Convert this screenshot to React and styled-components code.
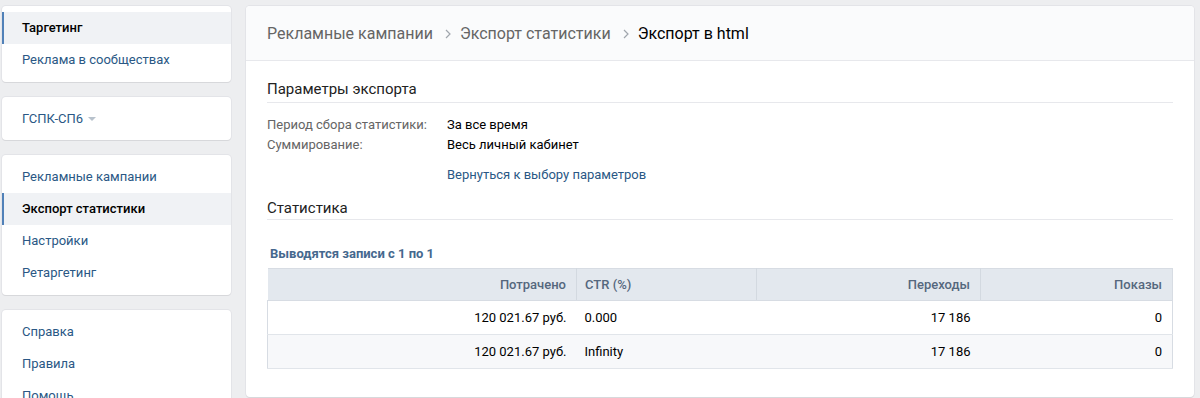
import styled, { createGlobalStyle } from "styled-components";

const GlobalStyle = createGlobalStyle`
  body {
    margin: 0;
    background: #edeef0;
    font-family: Roboto, "Open Sans", "DejaVu Sans", sans-serif;
    font-size: 13px;
    color: #000;
  }
`;

const Page = styled.div`
  display: flex;
  align-items: flex-start;
  gap: 15px;
  padding: 6px 6px 0 2px;
  height: 392px;
  overflow: hidden;
`;

const Sidebar = styled.div`
  width: 229px;
  flex-shrink: 0;
  display: flex;
  flex-direction: column;
  gap: 15px;
`;

const Card = styled.div`
  background: #fff;
  border-radius: 4px;
  box-shadow: 0 1px 0 0 #d7d8db, 0 0 0 1px #e3e4e8;
  padding: ${(p) => p.$pad || "6px 0"};
`;

const NavItem = styled.div`
  height: 32px;
  line-height: 32px;
  padding-left: 18px;
  color: ${(p) => (p.$active ? "#000" : "#2a5885")};
  font-weight: ${(p) => (p.$active ? 500 : 400)};
  background: ${(p) => (p.$active ? "#f0f2f5" : "transparent")};
  border-left: 2px solid ${(p) => (p.$active ? "#5181b8" : "transparent")};
`;

const Account = styled.div`
  height: 43px;
  padding-left: 20px;
  color: #2a5885;
  display: flex;
  align-items: center;
  gap: 5px;
`;

const Caret = styled.span`
  width: 0;
  height: 0;
  border-left: 4px solid transparent;
  border-right: 4px solid transparent;
  border-top: 4px solid #b8c2cc;
  margin-top: 1px;
`;

const Main = styled.div`
  flex: 1;
  background: #fff;
  border-radius: 4px;
  box-shadow: 0 1px 0 0 #d7d8db, 0 0 0 1px #e3e4e8;
  min-height: 391px;
`;

const Header = styled.div`
  height: 54px;
  background: #fafbfc;
  border-bottom: 1px solid #e7e8ec;
  border-radius: 4px 4px 0 0;
  display: flex;
  align-items: center;
  padding: 0 21px;
  font-size: 16px;
  color: #656565;
`;

const Crumb = styled.span`
  color: ${(p) => (p.$current ? "#000" : "#656565")};
`;

const Sep = styled.svg`
  width: 6px;
  height: 10px;
  margin: 1px 9px 0 12px;
`;

const Chevron = () => (
  <Sep viewBox="0 0 6 10">
    <path d="M1 1l4 4-4 4" fill="none" stroke="#a0a6ad" strokeWidth="1.2" />
  </Sep>
);

const Body = styled.div`
  padding: 19px 21px 20px;
`;

const SectionTitle = styled.div`
  font-size: 15px;
  line-height: 18px;
  color: #222;
  padding-bottom: ${(p) => p.$pb || "4px"};
  border-bottom: 1px solid #e7e8ec;
  margin-top: ${(p) => p.$mt || "0"};
  margin-bottom: ${(p) => p.$mb || "12px"};
`;

const ParamRow = styled.div`
  display: flex;
  line-height: 20px;
`;

const ParamLabel = styled.div`
  width: 180px;
  color: #656565;
`;

const Link = styled.a`
  color: #2a5885;
  text-decoration: none;
  display: block;
  margin: 10px 0 0 180px;
  line-height: 20px;
`;

const Note = styled.div`
  font-weight: 700;
  color: #45688e;
  padding-left: 3px;
  margin-bottom: 6px;
  line-height: 16px;
`;

const Table = styled.table`
  width: 100%;
  table-layout: fixed;
  border-collapse: collapse;
  border: 1px solid #d7dce3;
`;

const Th = styled.th`
  box-sizing: border-box;
  background: #e3e8ee;
  color: #55677d;
  font-weight: 500;
  height: 32px;
  padding: 0 10px 0 8px;
  text-align: ${(p) => p.$align || "right"};
  border-left: 1px solid ${(p) => (p.$first ? "transparent" : "#d3d9e0")};
  border-bottom: 1px solid #d7dce3;
  width: ${(p) => p.$w || "auto"};
`;

const Tr = styled.tr`
  background: ${(p) => (p.$alt ? "#f7f8fa" : "#fff")};
`;

const Td = styled.td`
  height: 33px;
  padding: 0 10px 0 8px;
  text-align: ${(p) => p.$align || "right"};
  border-bottom: 1px solid #e1e5ea;
  color: #000;
`;

const rows = [
  { spent: "120 021.67 руб.", ctr: "0.000", clicks: "17 186", shows: "0" },
  { spent: "120 021.67 руб.", ctr: "Infinity", clicks: "17 186", shows: "0" },
];

export default function App() {
  return (
    <>
      <GlobalStyle />
      <Page>
        <Sidebar>
          <Card>
            <NavItem $active>Таргетинг</NavItem>
            <NavItem>Реклама в сообществах</NavItem>
          </Card>
          <Card $pad="0">
            <Account>
              ГСПК-СП6 <Caret />
            </Account>
          </Card>
          <Card>
            <NavItem>Рекламные кампании</NavItem>
            <NavItem $active>Экспорт статистики</NavItem>
            <NavItem>Настройки</NavItem>
            <NavItem>Ретаргетинг</NavItem>
          </Card>
          <Card>
            <NavItem>Справка</NavItem>
            <NavItem>Правила</NavItem>
            <NavItem>Помощь</NavItem>
          </Card>
        </Sidebar>
        <Main>
          <Header>
            <Crumb>Рекламные кампании</Crumb>
            <Chevron />
            <Crumb>Экспорт статистики</Crumb>
            <Chevron />
            <Crumb $current>Экспорт в html</Crumb>
          </Header>
          <Body>
            <SectionTitle>Параметры экспорта</SectionTitle>
            <ParamRow>
              <ParamLabel>Период сбора статистики:</ParamLabel>
              <div>За все время</div>
            </ParamRow>
            <ParamRow>
              <ParamLabel>Суммирование:</ParamLabel>
              <div>Весь личный кабинет</div>
            </ParamRow>
            <Link href="#">Вернуться к выбору параметров</Link>
            <SectionTitle $mt="14px" $pb="2px" $mb="26px">
              Статистика
            </SectionTitle>
            <Note>Выводятся записи с 1 по 1</Note>
            <Table>
              <thead>
                <tr>
                  <Th $first $w="309px">Потрачено</Th>
                  <Th $align="left" $w="180px">CTR (%)</Th>
                  <Th $w="224px">Переходы</Th>
                  <Th>Показы</Th>
                </tr>
              </thead>
              <tbody>
                {rows.map((r, i) => (
                  <Tr key={i} $alt={i % 2 === 1}>
                    <Td>{r.spent}</Td>
                    <Td $align="left">{r.ctr}</Td>
                    <Td>{r.clicks}</Td>
                    <Td>{r.shows}</Td>
                  </Tr>
                ))}
              </tbody>
            </Table>
          </Body>
        </Main>
      </Page>
    </>
  );
}
